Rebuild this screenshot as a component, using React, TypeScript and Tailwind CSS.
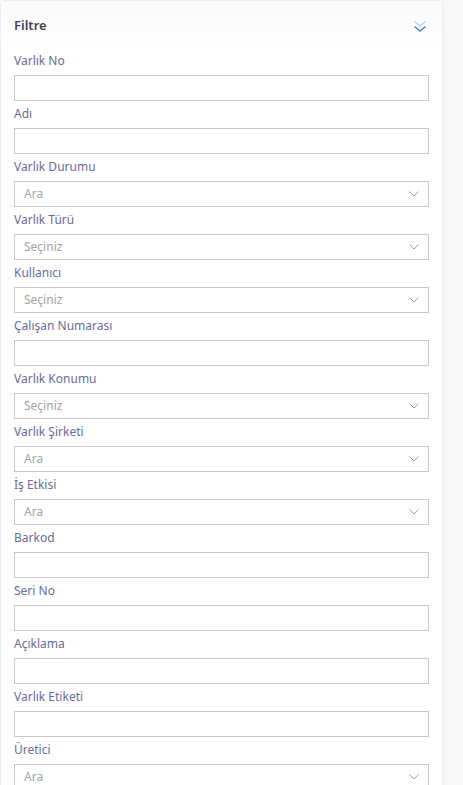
import { ReactNode } from 'react';

type Field = {
  label: string;
  kind: 'text' | 'select';
  placeholder?: string;
};

const fields: Field[] = [
  { label: 'Varlık No', kind: 'text' },
  { label: 'Adı', kind: 'text' },
  { label: 'Varlık Durumu', kind: 'select', placeholder: 'Ara' },
  { label: 'Varlık Türü', kind: 'select', placeholder: 'Seçiniz' },
  { label: 'Kullanıcı', kind: 'select', placeholder: 'Seçiniz' },
  { label: 'Çalışan Numarası', kind: 'text' },
  { label: 'Varlık Konumu', kind: 'select', placeholder: 'Seçiniz' },
  { label: 'Varlık Şirketi', kind: 'select', placeholder: 'Ara' },
  { label: 'İş Etkisi', kind: 'select', placeholder: 'Ara' },
  { label: 'Barkod', kind: 'text' },
  { label: 'Seri No', kind: 'text' },
  { label: 'Açıklama', kind: 'text' },
  { label: 'Varlık Etiketi', kind: 'text' },
  { label: 'Üretici', kind: 'select', placeholder: 'Ara' },
];

function DoubleChevron() {
  return (
    <svg width="14" height="14" viewBox="0 0 14 14" fill="none" className="mt-[4px]">
      <path d="M1.5 2.5 7 7 12.5 2.5" stroke="#b9d1f6" strokeWidth="1.6" />
      <path d="M1.5 7.5 7 12 12.5 7.5" stroke="#4a80d8" strokeWidth="1.6" />
    </svg>
  );
}

function SelectArrow() {
  return (
    <svg width="10" height="6" viewBox="0 0 10 6" fill="none">
      <path d="M0.5 0.5 5 5 9.5 0.5" stroke="#8d98c2" strokeWidth="1" />
    </svg>
  );
}

function FieldRow({ field }: { field: Field }) {
  let control: ReactNode;
  if (field.kind === 'select') {
    control = (
      <div className="flex h-[26px] items-center justify-between border border-[#c9c9c9] bg-white pl-[9px] pr-[9px]">
        <span className="text-[12px] text-[#a3a3a3]">{field.placeholder}</span>
        <SelectArrow />
      </div>
    );
  } else {
    control = <div className="h-[26px] border border-[#c9c9c9] bg-white" />;
  }

  return (
    <div className="pb-[4px]">
      <div className="h-[18px] text-[12px] leading-[18px] text-[#686b99]">{field.label}</div>
      <div className="mt-[5px]">{control}</div>
    </div>
  );
}

export default function App() {
  return (
    <div
      className="min-h-screen overflow-hidden bg-[#f7f8fa]"
      style={{ fontFamily: '"Noto Sans", "Open Sans", sans-serif' }}
    >
      <div className="w-[443px] rounded-t-[6px] border border-[#e9ebf0] bg-white shadow-[0_0_6px_rgba(0,0,0,0.04)]">
        {/* Card header */}
        <div className="flex h-[46px] items-center justify-between bg-gradient-to-b from-[#f9f9fa] to-white pl-[13px] pr-[15px]">
          <span className="mt-[3px] text-[13px] font-semibold text-[#3f4254]">Filtre</span>
          <DoubleChevron />
        </div>

        {/* Filter fields */}
        <div className="px-[13px] pt-[5px]">
          {fields.map((field) => (
            <FieldRow key={field.label} field={field} />
          ))}
        </div>
      </div>
    </div>
  );
}
